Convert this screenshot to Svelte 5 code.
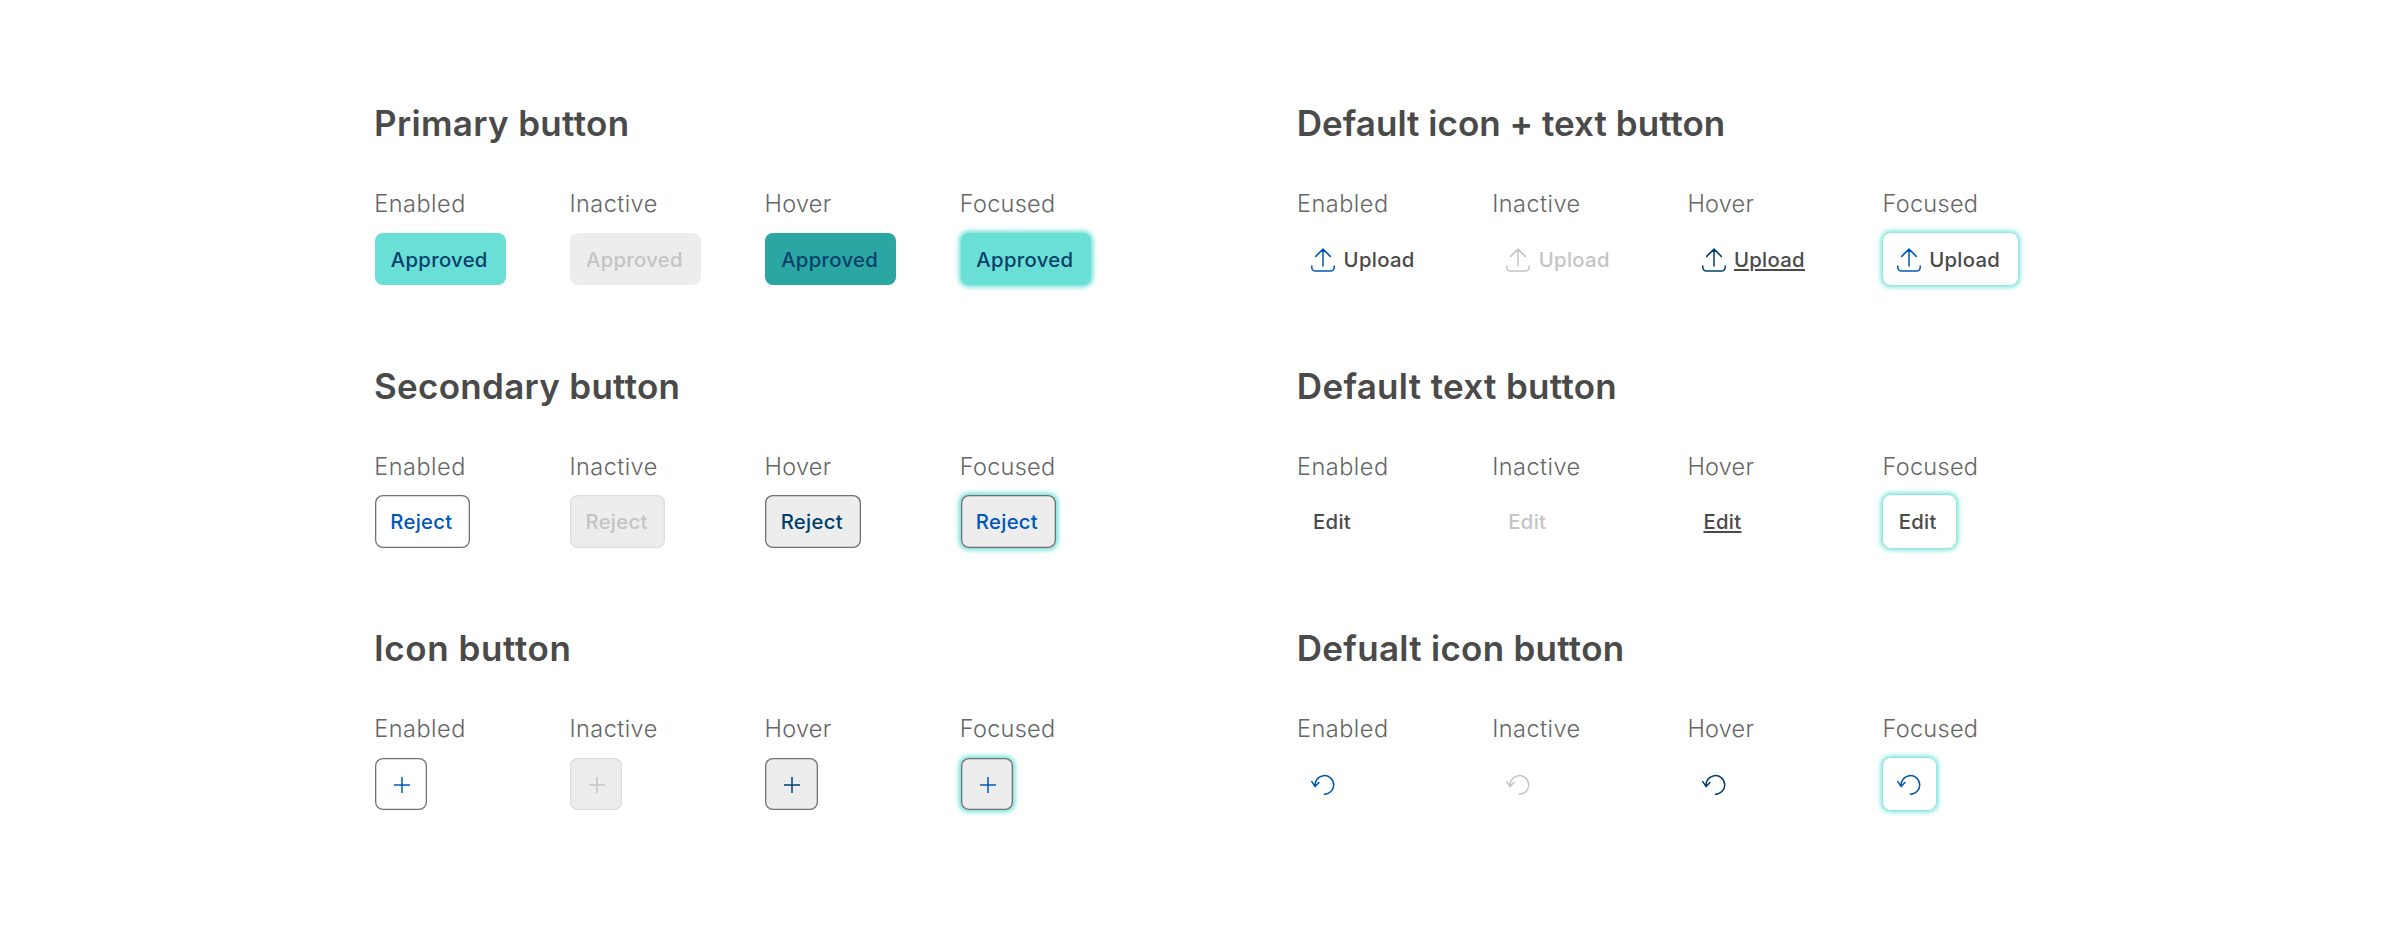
<script>
  const states = [
    { name: 'Enabled', track: 0.5 },
    { name: 'Inactive', track: 0.45 },
    { name: 'Hover', track: 0.25 },
    { name: 'Focused', track: 0.28 }
  ];

  const groups = [
    { title: 'Primary button', track: 0.34, kind: 'primary', text: 'Approved' },
    { title: 'Default icon + text button', track: 0.03, kind: 'ghost labelled', icon: 'upload', text: 'Upload' },
    { title: 'Secondary button', track: 0.29, kind: 'secondary', text: 'Reject' },
    { title: 'Default text button', track: 0.32, kind: 'ghost textual', text: 'Edit' },
    { title: 'Icon button', track: 0.6, kind: 'secondary square', icon: 'plus' },
    { title: 'Defualt icon button', track: 0.28, kind: 'ghost single', icon: 'undo' }
  ];

  const icons = {
    upload: 'M12 18V1.2M4.7 8.4L12 1.1L19.3 8.4M.8 17.9V19.4A3.6 3.6 0 0 0 4.4 23H19.6A3.6 3.6 0 0 0 23.2 19.4V17.9',
    plus: 'M12 4V20M4 12H20',
    undo: 'M13.4 21.2A9.3 9.3 0 1 0 4.2 13.3M.8 8.6L4.1 13.6L8 9.5'
  };
</script>

<main>
  {#each groups as group}
    <section>
      <h2 style:letter-spacing="{group.track}px">{group.title}</h2>
      <div class="states">
        {#each states as state}
          <div class="state">
            <span class="label" style:letter-spacing="{state.track}px">{state.name}</span>
            <button
              class="{group.kind} {state.name.toLowerCase()}"
              disabled={state.name === 'Inactive'}
              aria-label={group.text ? undefined : group.icon}
            >
              {#if group.icon}
                <svg viewBox="0 0 24 24" aria-hidden="true"><path d={icons[group.icon]} /></svg>
              {/if}
              {#if group.text}<span class="text">{group.text}</span>{/if}
            </button>
          </div>
        {/each}
      </div>
    </section>
  {/each}
</main>

<style>
  :global(body) {
    margin: 0;
    background: #fff;
  }

  main {
    box-sizing: border-box;
    width: 2400px;
    height: 940px;
    padding: 103.3px 0 0 375px;
    display: grid;
    grid-template-columns: 922.8px 922.8px;
    grid-auto-rows: 262.5px;
    font-family: Inter, sans-serif;
    overflow: hidden;
  }

  h2 {
    margin: 0 0 0 -1px;
    font-size: 35px;
    font-weight: 600;
    line-height: 40px;
    color: #4a4a4a;
    white-space: nowrap;
  }

  .states {
    display: grid;
    grid-template-columns: repeat(4, 195.2px);
    margin-top: 46.8px;
  }

  .state {
    display: flex;
    flex-direction: column;
    align-items: flex-start;
  }

  .label {
    margin-left: -0.8px;
    font-size: 23.5px;
    font-weight: 300;
    line-height: 28px;
    color: #666;
  }

  button {
    box-sizing: border-box;
    display: flex;
    align-items: center;
    height: 52.3px;
    margin: 14.8px 0 0;
    padding: 1.2px 0 0 15.3px;
    border: 0;
    border-radius: 8px;
    background: transparent;
    font: 540 20.3px/52px Inter, sans-serif;
    letter-spacing: 0.3px;
    color: #4a4a4a;
  }

  svg {
    flex: none;
    width: 24px;
    height: 24px;
    fill: none;
    stroke: #0057b8;
    stroke-width: 1.5;
    stroke-linecap: round;
    stroke-linejoin: round;
  }

  .hover svg {
    stroke: #003f6b;
  }

  .inactive svg {
    stroke: #c4c4c4;
  }

  .primary {
    width: 130.8px;
    padding-left: 15.8px;
    background: #6adfd5;
    color: #003f6b;
  }

  .primary.hover {
    background: #2ba6a3;
  }

  .secondary {
    width: 95.3px;
    color: #0057b8;
    box-shadow: inset 0 0 0 1.3px #717171;
  }

  .secondary.hover {
    background: #ededed;
    color: #003f6b;
  }

  .secondary.focused {
    background: #ededed;
  }

  .square {
    width: 52.3px;
    padding-left: 15px;
  }

  .square svg {
    stroke-linecap: butt;
  }

  .primary.inactive,
  .secondary.inactive {
    background: #ededed;
    color: #c4c4c4;
  }

  .secondary.inactive {
    box-shadow: inset 0 0 0 1.3px #dedede;
  }

  .labelled {
    width: 135px;
    padding-left: 13.4px;
    gap: 8.4px;
  }

  .textual {
    width: 72.3px;
  }

  .single {
    width: 53px;
    padding-left: 13.4px;
  }

  .ghost.inactive {
    color: #c4c4c4;
  }

  .ghost.hover .text {
    text-decoration: underline;
    text-decoration-thickness: 1.6px;
    text-underline-offset: 2px;
  }

  .primary.focused,
  .ghost.focused {
    box-shadow: 0 0 5px 1.3px #6adfd5;
  }

  .secondary.focused {
    box-shadow: inset 0 0 0 1.3px #717171, 0 0 5px 1.3px #6adfd5;
  }
</style>
